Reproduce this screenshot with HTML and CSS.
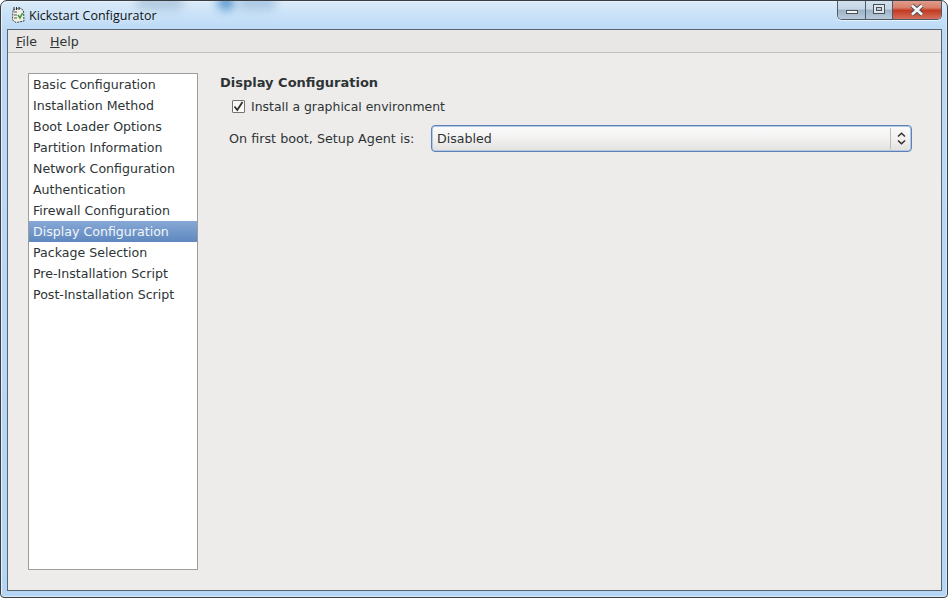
FILE: index.html
```html
<!DOCTYPE html>
<html lang="en">
<head>
<meta charset="utf-8">
<title>Kickstart Configurator</title>
<link rel="stylesheet" href="styles.css">
</head>
<body>
<div class="window">
  <span class="blob blob-a"></span>
  <span class="blob blob-b"></span>
  <span class="blob blob-c"></span>
  <header class="titlebar">
    <svg class="app-icon" width="16" height="18" viewBox="0 0 16 18">
      <path d="M3 4 L10 2 L13.5 4.5 L14 15 L6 16.5 L2.5 14 Z" fill="#f1f1e8" stroke="#3c3c38" stroke-width="1" stroke-dasharray="2 1"/>
      <path d="M4 1v3M6.5 1v3M9 1v3" stroke="#333" stroke-width="1"/>
      <path d="M4 6h3M4 9h3M4 12h3" stroke="#555" stroke-width="1"/>
      <path d="M8 9l2 3 2.5-5" fill="none" stroke="#3c9a3c" stroke-width="1.6"/>
    </svg>
    <span class="title">Kickstart Configurator</span>
    <div class="caption-buttons">
      <div class="cap cap-min"><span class="glyph-min"></span></div>
      <div class="cap cap-max"><span class="glyph-max"></span></div>
      <div class="cap cap-close">
        <svg width="18" height="14" viewBox="0 0 18 14"><path d="M4 2.5 L14 11.5 M14 2.5 L4 11.5" stroke="#4a4f58" stroke-width="4.6"/><path d="M4 2.5 L14 11.5 M14 2.5 L4 11.5" stroke="#f4f4f4" stroke-width="2.8"/></svg>
      </div>
    </div>
  </header>
  <div class="client">
    <nav class="menubar">
      <span class="menu-item"><u>F</u>ile</span>
      <span class="menu-item"><u>H</u>elp</span>
    </nav>
    <main class="content">
      <ul class="nav-list">
        <li>Basic Configuration</li>
        <li>Installation Method</li>
        <li>Boot Loader Options</li>
        <li>Partition Information</li>
        <li>Network Configuration</li>
        <li>Authentication</li>
        <li>Firewall Configuration</li>
        <li class="selected">Display Configuration</li>
        <li>Package Selection</li>
        <li>Pre-Installation Script</li>
        <li>Post-Installation Script</li>
      </ul>
      <section class="panel">
        <h1 class="heading">Display Configuration</h1>
        <label class="check-row">
          <span class="checkbox">
            <svg width="11" height="11" viewBox="0 0 11 11"><path d="M1.5 5.5 L4.3 9 L9.5 1" fill="none" stroke="#2e2e2c" stroke-width="1.8"/></svg>
          </span>
          Install a graphical environment
        </label>
        <div class="field-row">
          <span class="field-label">On first boot, Setup Agent is:</span>
          <div class="combo">
            <span class="combo-value">Disabled</span>
            <span class="combo-arrows">
              <svg width="9" height="13" viewBox="0 0 9 13"><path d="M1 4.5 L4.5 1.2 L8 4.5 M1 8.5 L4.5 11.8 L8 8.5" fill="none" stroke="#2e2e2c" stroke-width="1.5"/></svg>
            </span>
          </div>
        </div>
      </section>
    </main>
  </div>
</div>
</body>
</html>
```
FILE: styles.css
```css
html, body {
  margin: 0;
  padding: 0;
  width: 948px;
  height: 598px;
  overflow: hidden;
  background: #fff;
}
.window {
  position: relative;
  box-sizing: border-box;
  width: 948px;
  height: 598px;
  display: flex;
  flex-direction: column;
  padding: 0 5px 6px 6px;
  overflow: hidden;
  border: 1px solid #3a3f45;
  border-radius: 7px 7px 4px 4px;
  background: linear-gradient(180deg, #dcebf8 0, #cbe3f9 12px, #bcdaf6 28px, #b5d5f5 100%);
  box-shadow: inset 1px 1px 0 #e6f1fb, inset -1px -1px 0 #d8e8f8;
  font-family: "DejaVu Sans", sans-serif;
  font-size: 12.6px;
  color: #2e3436;
}
.blob {
  position: absolute;
  top: -6px;
  height: 15px;
  border-radius: 8px;
  filter: blur(5px);
  opacity: 0.8;
}
.blob-a { left: 135px; width: 48px; background: #a9c2d8; }
.blob-b { left: 216px; width: 18px; background: #3f86c4; }
.blob-c { left: 236px; width: 40px; background: #9fc0de; }
.titlebar {
  position: relative;
  height: 28px;
  flex: none;
  display: flex;
  align-items: center;
  padding-left: 2px;
}
.app-icon {
  margin-left: 1px;
}
.title {
  margin-left: 3px;
  font-family: "Open Sans", sans-serif;
  font-size: 12.5px;
  color: #111;
  text-shadow: 0 0 6px #eaf4fd;
}
.caption-buttons {
  position: absolute;
  top: -1px;
  right: 0;
  display: flex;
  height: 19px;
  border: 1px solid #4d5a68;
  border-top: none;
  border-radius: 0 0 5px 5px;
  overflow: hidden;
  box-shadow: 0 1px 0 #e8f2fb;
}
.cap {
  height: 100%;
  display: flex;
  align-items: center;
  justify-content: center;
}
.cap-min, .cap-max {
  background: linear-gradient(180deg, #d3e0ed 0, #c6d6e6 45%, #9fb4c8 55%, #b9cadb 100%);
  border-right: 1px solid #4d5a68;
}
.cap-min { width: 27px; }
.cap-max { width: 26px; }
.cap-close {
  width: 48px;
  background: linear-gradient(180deg, #e0a294 0, #d9806a 40%, #c43a22 55%, #d4705c 100%);
}
.glyph-min {
  width: 10px;
  height: 2px;
  margin-top: 5px;
  background: #f4f5f6;
  border: 1px solid #4a4f58;
}
.glyph-max {
  box-sizing: border-box;
  width: 10px;
  height: 8px;
  margin-bottom: 1px;
  border: 2px solid #dfe6ee;
  outline: 1px solid #4a4f58;
  box-shadow: inset 0 0 0 1px #4a4f58;
}
.client {
  flex: 1;
  display: flex;
  flex-direction: column;
  min-height: 0;
  border: 1px solid #59656f;
  background: #edeceb;
}
.menubar {
  flex: none;
  box-sizing: border-box;
  height: 23px;
  display: flex;
  align-items: center;
  gap: 13px;
  padding: 0 8px;
  background: #e8e7e5;
  border-bottom: 1px solid #c3c0bb;
}
.content {
  flex: 1;
  min-height: 0;
  display: flex;
  padding: 20px 29px 20px 20px;
}
.nav-list {
  box-sizing: border-box;
  width: 170px;
  flex: none;
  margin: 0;
  padding: 0;
  list-style: none;
  background: #fff;
  border: 1px solid #9e9d9b;
}
.nav-list li {
  height: 21px;
  line-height: 21px;
  padding-left: 4px;
  white-space: nowrap;
}
.nav-list li.selected {
  color: #f2f5fa;
  background: linear-gradient(180deg, #86a8d5, #5e88bf);
}
.panel {
  flex: 1;
  min-width: 0;
  margin-left: 22px;
}
.heading {
  margin: 0;
  font-size: 13px;
  font-weight: bold;
  line-height: 19px;
}
.check-row {
  display: flex;
  align-items: center;
  height: 16px;
  margin: 6px 0 0 12px;
  font-size: 12.45px;
}
.checkbox {
  box-sizing: border-box;
  width: 13px;
  height: 13px;
  margin-right: 6px;
  display: flex;
  align-items: center;
  justify-content: center;
  background: linear-gradient(180deg, #f6f6f5, #fff);
  border: 1px solid #77736c;
  border-radius: 1px;
}
.field-row {
  display: flex;
  align-items: center;
  margin: 11px 0 0 9px;
}
.field-label {
  width: 202px;
  flex: none;
  font-size: 12.75px;
}
.combo {
  flex: 1;
  box-sizing: border-box;
  height: 27px;
  display: flex;
  align-items: center;
  justify-content: space-between;
  padding-left: 5px;
  background: linear-gradient(180deg, #fbfbfb 0, #f4f3f2 45%, #e3e1de 100%);
  border: 1px solid #5c82b5;
  border-radius: 4px;
  box-shadow: 0 0 0 1px #b4c8e3 inset;
}
.combo-arrows {
  display: flex;
  align-items: center;
  justify-content: center;
  width: 20px;
  height: 21px;
  border-left: 1px solid #bdbcb9;
}
```
